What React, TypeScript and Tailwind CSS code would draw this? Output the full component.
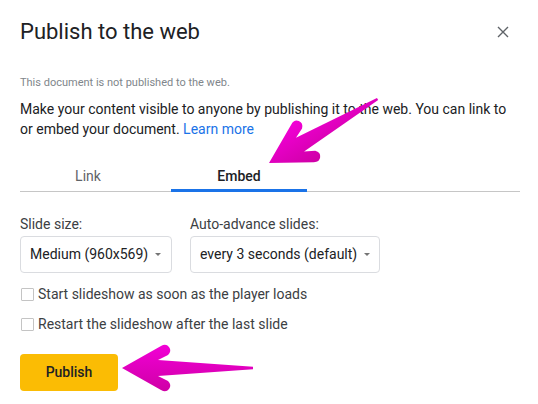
import React from "react";

const FONT = { fontFamily: "Roboto, 'Liberation Sans', Arial, sans-serif" };

function arrowPath(len: number) {
  return `M0 0 L39 -22 Q44 -25 47 -21 Q50 -17 46 -13 L36 -8 L${len} -1.2 L${len} 1.2 L36 8 L46 13 Q50 17 47 21 Q44 25 39 22 Z`;
}

function Caret() {
  return (
    <svg width="6" height="3" viewBox="0 0 6 3" className="shrink-0">
      <path d="M0 0h6L3 3z" fill="#757575" />
    </svg>
  );
}

function Select({ value, width }: { value: string; width: string }) {
  return (
    <div className={`${width} h-[37px] border border-[#dadce0] rounded-[4px] flex items-center gap-[7px] pl-[9px] text-[14px] text-[#202124]`}>
      <span>{value}</span>
      <Caret />
    </div>
  );
}

function Check({ label }: { label: string }) {
  return (
    <label className="flex items-center h-[20px] gap-[4px] text-[14px] text-[#3c4043]">
      <span className="w-[13px] h-[13px] border border-[#c4c4c4] rounded-[1px] bg-white shrink-0 ml-px" />
      <span>{label}</span>
    </label>
  );
}

export default function App() {
  return (
    <div className="relative w-[538px] h-[404px] bg-white overflow-hidden" style={FONT}>
      <div className="px-[20px] w-[540px]">
        <div className="mt-[18px] h-[28px] w-[500px] flex items-center justify-between">
          <h1 className="text-[22px] leading-[28px] text-[#202124]">Publish to the web</h1>
          <svg width="12" height="12" viewBox="0 0 12 12" className="mr-[11px]">
            <path d="M1 1L11 11M11 1L1 11" stroke="#5f6368" strokeWidth="1.4" />
          </svg>
        </div>

        <p className="mt-[29px] text-[11px] leading-[16px] text-[#80868b]">This document is not published to the web.</p>

        <p className="mt-[8px] text-[14px] leading-[20px] text-[#202124] w-[500px] whitespace-nowrap">
          Make your content visible to anyone by publishing it to the web. You can link to
          <br />
          or embed your document. <span className="text-[#1a73e8]">Learn more</span>
        </p>

        <div className="mt-[27px] w-[500px] h-[26px] flex gap-[15px] border-b border-[#c6c6c6] text-[14px] leading-[20px]">
          <div className="w-[136px] text-center text-[#5f6368]">Link</div>
          <div className="w-[136px] h-[26px] text-center text-[#202124] font-medium border-b-[3px] border-[#1a73e8]">Embed</div>
        </div>

        <div className="mt-[22px] flex gap-[18px]">
          <div className="flex flex-col gap-[2px]">
            <span className="text-[14px] leading-[20px] text-[#3c4043]">Slide size:</span>
            <Select value="Medium (960x569)" width="w-[152px]" />
          </div>
          <div className="flex flex-col gap-[2px]">
            <span className="text-[14px] leading-[20px] text-[#3c4043]">Auto-advance slides:</span>
            <Select value="every 3 seconds (default)" width="w-[190px]" />
          </div>
        </div>

        <div className="mt-[11px] flex flex-col gap-[10px]">
          <Check label="Start slideshow as soon as the player loads" />
          <Check label="Restart the slideshow after the last slide" />
        </div>

        <button className="mt-[20px] w-[98px] h-[37px] rounded-[4px] bg-[#fbbc04] text-[14px] font-medium text-[#202124]">
          Publish
        </button>
      </div>

      <svg className="absolute inset-0 pointer-events-none" width="538" height="404" viewBox="0 0 538 404">
        <defs>
          <linearGradient id="pink" x1="0" y1="0" x2="0" y2="1">
            <stop offset="0" stopColor="#f200d6" />
            <stop offset="1" stopColor="#cf00a6" />
          </linearGradient>
        </defs>
        <path d={arrowPath(126)} fill="url(#pink)" transform="translate(269 163) rotate(-30.5)" />
        <path d={arrowPath(131)} fill="url(#pink)" transform="translate(122 368)" />
      </svg>
    </div>
  );
}
